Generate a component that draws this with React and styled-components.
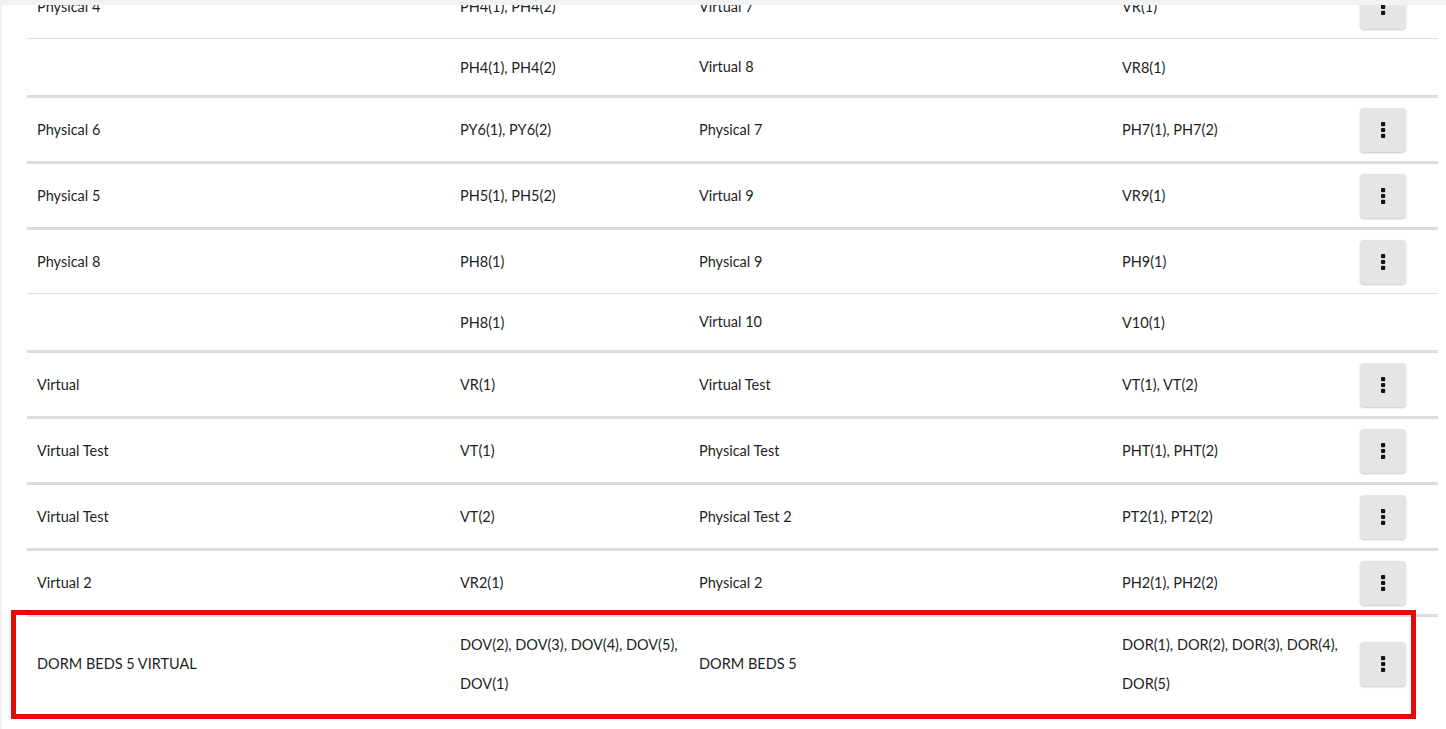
import React, { useLayoutEffect, useRef } from "react";
import styled, { createGlobalStyle, css } from "styled-components";

const GlobalStyle = createGlobalStyle`
	html, body {
		margin: 0;
		padding: 0;
		height: 100%;
		background: #f1f2f4;
		overflow: hidden;
	}
	body {
		font-family: Lato, "Open Sans", "Liberation Sans", sans-serif;
		font-size: 14.5px;
		color: #1c1f24;
	}
`;

const groups = [
	{
		name: "Physical 4",
		rows: [
			["PH4(1), PH4(2)", "Virtual 7", "VR(1)"],
			["PH4(1), PH4(2)", "Virtual 8", "VR8(1)"],
		],
	},
	{ name: "Physical 6", rows: [["PY6(1), PY6(2)", "Physical 7", "PH7(1), PH7(2)"]] },
	{ name: "Physical 5", rows: [["PH5(1), PH5(2)", "Virtual 9", "VR9(1)"]] },
	{
		name: "Physical 8",
		rows: [
			["PH8(1)", "Physical 9", "PH9(1)"],
			["PH8(1)", "Virtual 10", "V10(1)"],
		],
	},
	{ name: "Virtual", rows: [["VR(1)", "Virtual Test", "VT(1), VT(2)"]] },
	{ name: "Virtual Test", rows: [["VT(1)", "Physical Test", "PHT(1), PHT(2)"]] },
	{ name: "Virtual Test", rows: [["VT(2)", "Physical Test 2", "PT2(1), PT2(2)"]] },
	{ name: "Virtual 2", rows: [["VR2(1)", "Physical 2", "PH2(1), PH2(2)"]] },
	{
		name: "DORM BEDS 5 VIRTUAL",
		highlighted: true,
		rows: [
			[
				"DOV(2), DOV(3), DOV(4), DOV(5), DOV(1)",
				"DORM BEDS 5",
				"DOR(1), DOR(2), DOR(3), DOR(4), DOR(5)",
			],
		],
	},
];

function MoreIcon() {
	return (
		<svg width='24' height='24' viewBox='0 0 24 24' fill='#101318'>
			<rect x='10' y='4' width='4.2' height='4.2' rx='1' />
			<rect x='10' y='9.9' width='4.2' height='4.2' rx='1' />
			<rect x='10' y='15.8' width='4.2' height='4.2' rx='1' />
		</svg>
	);
}

export default function App() {
	const viewRef = useRef(null);

	// the list is shown scrolled a little past its top
	useLayoutEffect(() => {
		if (viewRef.current) viewRef.current.scrollTop = 30;
	}, []);

	return (
		<>
			<GlobalStyle />
			<Page>
				<Viewport ref={viewRef}>
					<Table>
						{groups.map((group, gi) => (
							<Group key={gi} $highlighted={group.highlighted}>
								{group.rows.map((row, ri) => (
									<Row key={ri} $sub={ri > 0} $tall={group.highlighted}>
										<Cell>{ri === 0 ? group.name : ""}</Cell>
										<Cell $wrap>{row[0]}</Cell>
										<Cell>{row[1]}</Cell>
										<Cell $wrap>{row[2]}</Cell>
										<ActionCell>
											{ri === 0 && (
												<MenuButton aria-label='more'>
													<MoreIcon />
												</MenuButton>
											)}
										</ActionCell>
									</Row>
								))}
							</Group>
						))}
					</Table>
				</Viewport>
			</Page>
		</>
	);
}

const Page = styled.div`
	height: 100vh;
	padding: 5px 0 0 2px;
	box-sizing: border-box;
`;

const Viewport = styled.main`
	height: 100%;
	background: #fff;
	overflow: hidden;
	padding: 0 8px 40px 25px;
	box-sizing: border-box;
`;

const Table = styled.section`
	display: flex;
	flex-direction: column;
`;

const Group = styled.div`
	position: relative;
	border-bottom: 3px solid #dcdcdc;

	${(p) =>
		p.$highlighted &&
		css`
			border-bottom: none;
			&::after {
				content: "";
				position: absolute;
				top: -7px;
				left: -16px;
				right: 22px;
				bottom: -8px;
				border: 5px solid #e40b0b;
				pointer-events: none;
			}
		`}
`;

const Row = styled.div`
	display: grid;
	grid-template-columns: 423fr 239fr 423fr 238fr 88px;
	align-items: center;
	min-height: ${(p) => (p.$sub ? "57px" : "63px")};
	padding: ${(p) => (p.$tall ? "8px 0" : "0")};
	border-top: ${(p) => (p.$sub ? "1px solid #e0e0e0" : "none")};
	box-sizing: border-box;
`;

const Cell = styled.div`
	padding: 0 10px;
	line-height: ${(p) => (p.$wrap ? "39px" : "20px")};
	white-space: ${(p) => (p.$wrap ? "normal" : "nowrap")};
`;

const ActionCell = styled.div`
	padding: 0 10px;
	display: flex;
	align-items: center;
`;

const MenuButton = styled.button`
	width: 46px;
	height: 44px;
	display: flex;
	align-items: center;
	justify-content: center;
	padding: 0;
	border: none;
	border-radius: 4px;
	background: #e5e5e5;
	box-shadow: 0 1px 2px rgba(0, 0, 0, 0.22);
	cursor: pointer;
`;
